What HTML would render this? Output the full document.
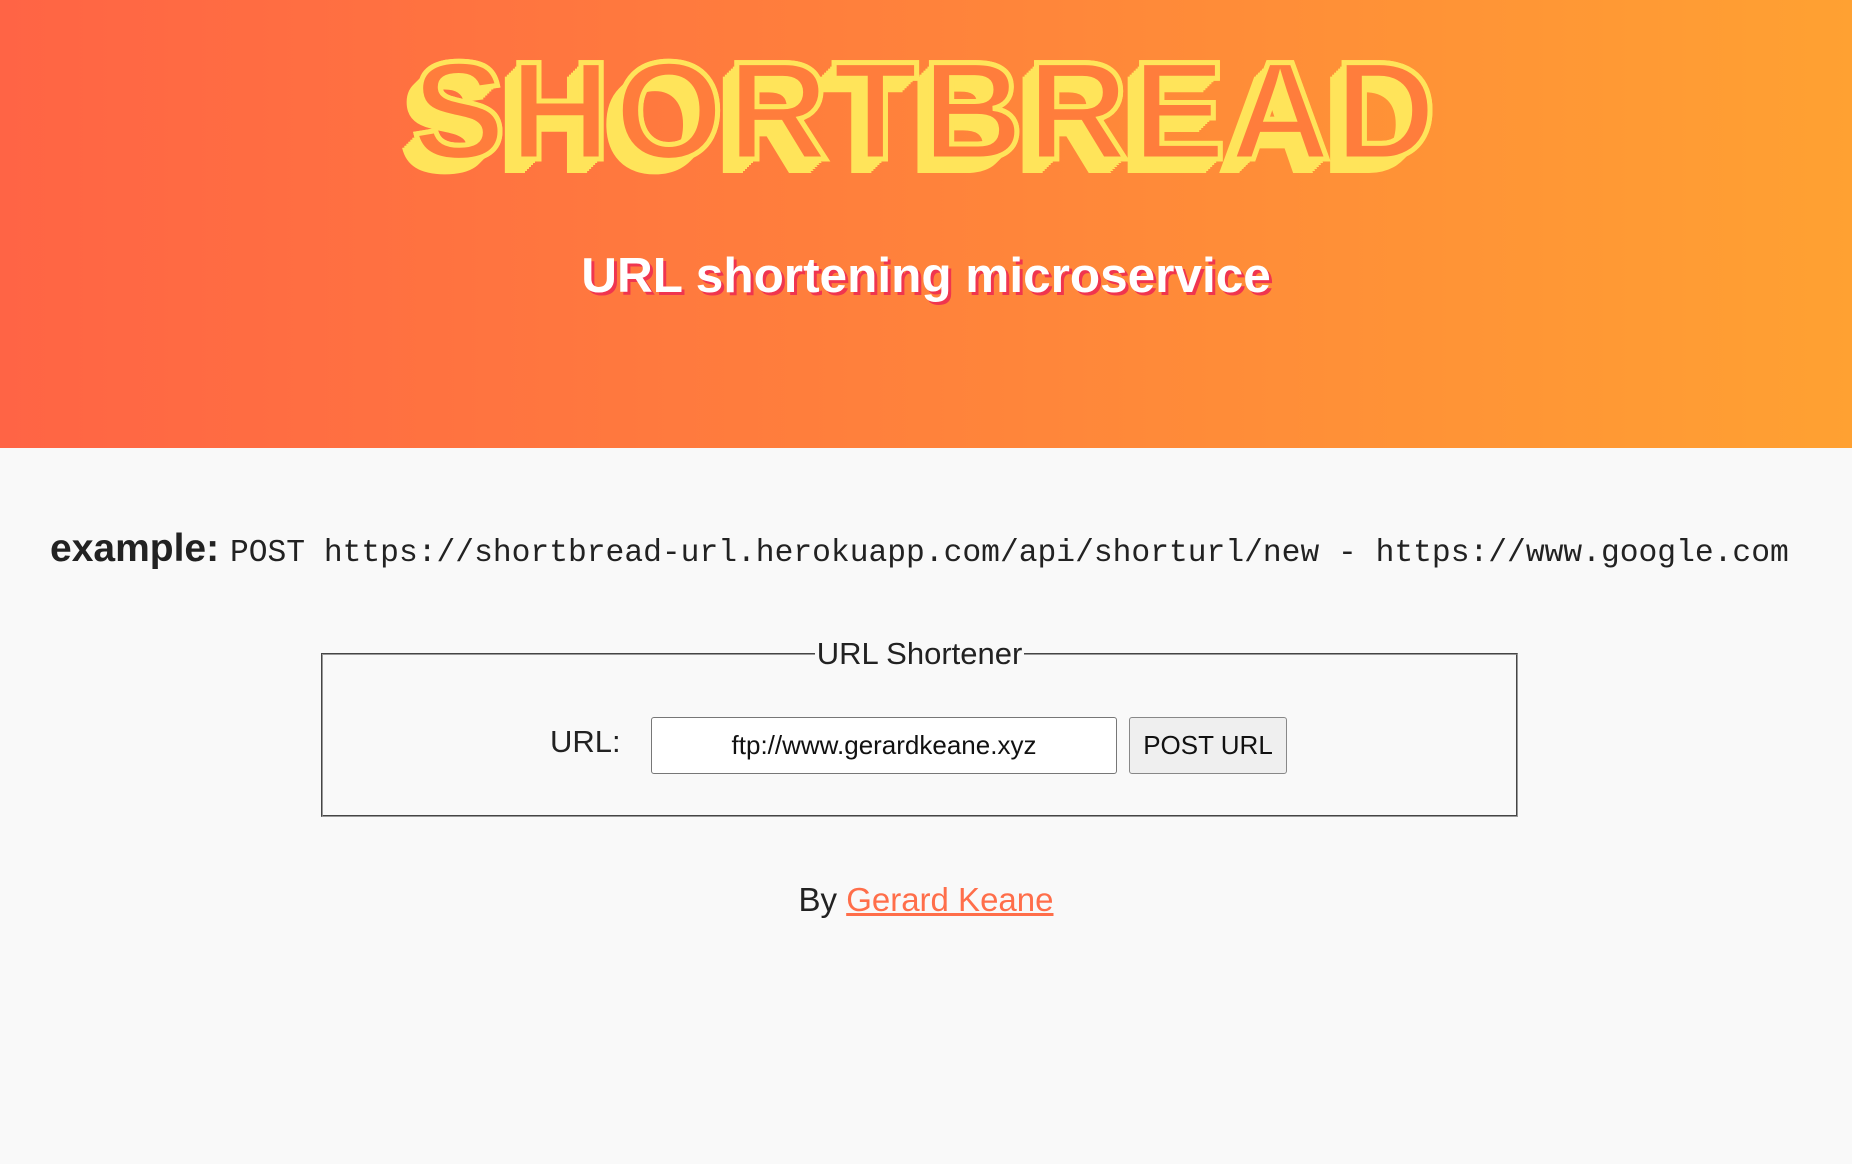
<!DOCTYPE html>
<html><head><meta charset="utf-8"><style>
html,body{margin:0;padding:0;}
body{width:1852px;height:1164px;background:#f9f9f9;font-family:"Liberation Sans",sans-serif;overflow:hidden;position:relative;}
.hdr{position:absolute;left:0;top:0;width:1852px;height:448px;background:linear-gradient(90deg,#ff6445 0%,#ff7f3c 45%,#ffa132 100%);}
.title{position:absolute;left:0;width:1852px;top:36px;text-align:center;font-weight:bold;font-size:140px;letter-spacing:4px;line-height:150px;color:rgba(255,120,60,0.0);-webkit-text-stroke:5px #ffe45a;
text-shadow:-2px 2px 0 #ffe45a,-4px 4px 0 #ffe45a,-6px 6px 0 #ffe45a,-8px 8px 0 #ffe45a,-10px 10px 0 #ffe45a,-12px 12px 0 #ffe45a,-14px 14px 0 #ffe45a;}
.title2{position:absolute;left:0;width:1852px;top:36px;text-align:center;font-weight:bold;font-size:140px;letter-spacing:4px;line-height:150px;color:#ff7d3c;-webkit-text-stroke:5px #ffe45a;}
.sub{position:absolute;left:0;width:1852px;top:247px;text-align:center;font-weight:bold;font-size:49.5px;color:#fff;text-shadow:3px 3px 0 #f0354f;}
.ex{position:absolute;left:50px;top:527px;font-size:39px;color:#222;white-space:nowrap;}
.ex b{font-weight:bold;}
.ex code{font-family:"Liberation Mono",monospace;font-size:31.3px;}
fieldset{position:absolute;left:321px;top:636px;width:1197px;height:181px;margin:0;padding:0;border:2px groove #999;box-sizing:border-box;}
legend{margin:0 auto;padding:0 2px;font-size:31px;color:#222;}
.lbl{position:absolute;left:550px;top:724px;font-size:31px;color:#222;}
.inp{position:absolute;left:651px;top:717px;width:466px;height:57px;box-sizing:border-box;border:1px solid #777;border-radius:3px;background:#fff;text-align:center;font-size:26px;line-height:55px;color:#111;}
.btn{position:absolute;left:1129px;top:717px;width:158px;height:57px;box-sizing:border-box;border:1px solid #888;border-radius:3px;background:#efefef;text-align:center;font-size:26px;line-height:55px;color:#111;}
.by{position:absolute;left:0;width:1852px;top:881px;text-align:center;font-size:33px;color:#222;}
.by a{color:#ff6e4a;text-decoration:underline;}
</style></head><body>
<div class="hdr"></div>
<div class="title">SHORTBREAD</div>
<div class="title2">SHORTBREAD</div>
<div class="sub">URL shortening microservice</div>
<div class="ex"><b>example:</b> <code>POST https://shortbread-url.herokuapp.com/api/shorturl/new - https://www.google.com</code></div>
<fieldset><legend>URL Shortener</legend></fieldset>
<div class="lbl">URL:</div>
<div class="inp">ftp://www.gerardkeane.xyz</div>
<div class="btn">POST URL</div>
<div class="by">By <a>Gerard Keane</a></div>
</body></html>
